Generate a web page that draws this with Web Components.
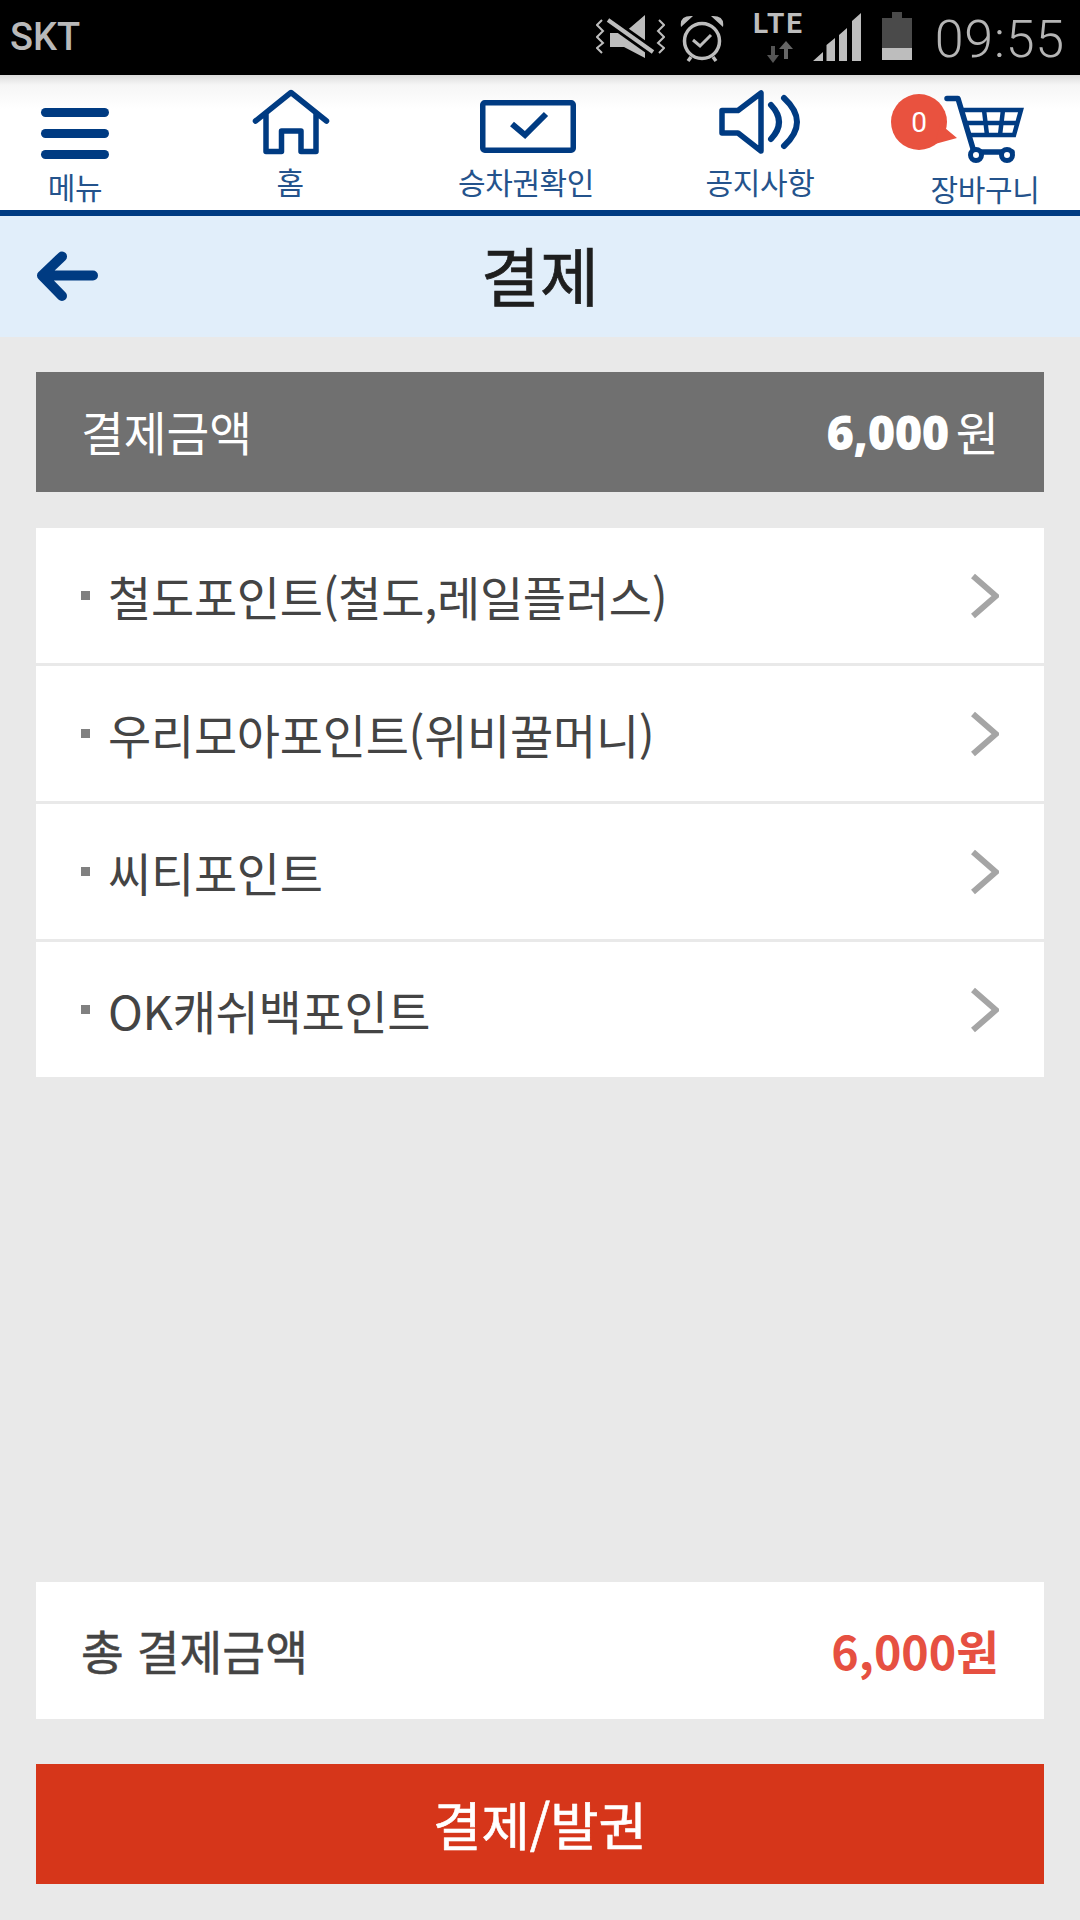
<!DOCTYPE html>
<html lang="ko"><head><meta charset="utf-8"><title>결제</title>
<style>
html,body{margin:0;padding:0;background:#e9e9e9}
body{font-family:"Noto Sans CJK KR","Noto Sans",sans-serif;width:1080px;height:1920px;overflow:hidden}
</style></head><body>
<app-screen>
  <status-bar></status-bar>
  <nav-bar>
    <nav-item w="150" drop="5" label="메뉴"><svg slot="icon" viewBox="15 85 120 85" width="120" height="85"><g fill="#003b82"><rect x="41" y="108" width="68" height="9" rx="4.500"/><rect x="41" y="129" width="68" height="9" rx="4.500"/><rect x="41" y="150" width="68" height="9" rx="4.500"/></g></svg></nav-item>
    <nav-item w="280" label="홈"><svg slot="icon" viewBox="230 85 120 85" width="120" height="85"><path d="M255.500 121L291 92.500L326.500 121M266 114V151.500H281.500V131H301V151.500H316V114" fill="none" stroke="#003b82" stroke-width="5.500" stroke-linecap="round" stroke-linejoin="round"/></svg></nav-item>
    <nav-item w="192" label="승차권확인"><svg slot="icon" viewBox="466 85 120 85" width="120" height="85"><rect x="482.750" y="102.750" width="90.500" height="47.500" rx="2" fill="none" stroke="#003b82" stroke-width="5.500"/><path d="M512 124L525 135L546 114" fill="none" stroke="#003b82" stroke-width="6"/></svg></nav-item>
    <nav-item w="276" label="공지사항"><svg slot="icon" viewBox="700 85 120 85" width="120" height="85"><path d="M722 110.500H738L761 93V151L738 133H722Z" fill="none" stroke="#003b82" stroke-width="5.500" stroke-linejoin="round"/><path d="M771 105Q787 122 771 139M784 98Q810 122 784 146" fill="none" stroke="#003b82" stroke-width="6" stroke-linecap="round"/></svg></nav-item>
    <nav-item w="174" drop="7" label="장바구니">
      <svg slot="icon" viewBox="925 85 120 85" width="120" height="85"><path d="M947 98.500H958L974 152H1012" fill="none" stroke="#003b82" stroke-width="5.500" stroke-linecap="round" stroke-linejoin="round"/><path d="M962 110H1021L1014 135H970M965 123H1018M984 110L987 135M1003 110L1000 135" fill="none" stroke="#003b82" stroke-width="4.500"/><circle cx="976" cy="155" r="5.500" fill="#fff" stroke="#003b82" stroke-width="5"/><circle cx="1007" cy="155" r="5.500" fill="#fff" stroke="#003b82" stroke-width="5"/></svg>
      <cart-badge slot="badge">0</cart-badge>
    </nav-item>
  </nav-bar>
  <title-bar>결제</title-bar>
  <main-area>
    <amount-bar><span slot="label">결제금액</span><b slot="num">6,000</b><span slot="unit">원</span></amount-bar>
    <option-row>철도포인트(철도,레일플러스)</option-row>
    <option-row>우리모아포인트(위비꿀머니)</option-row>
    <option-row>씨티포인트</option-row>
    <option-row>OK캐쉬백포인트</option-row>
    <total-bar><span slot="label">총 결제금액</span><span slot="value">6,000원</span></total-bar>
    <pay-button>결제/발권</pay-button>
  </main-area>
</app-screen>
<script>
function def(name,html,setup){
  customElements.define(name,class extends HTMLElement{
    constructor(){super();this.attachShadow({mode:'open'}).innerHTML=html;}
    connectedCallback(){if(setup)setup(this);}
  });
}
const FONT='"Noto Sans CJK KR","Noto Sans",sans-serif';
def('app-screen',`<style>:host{display:flex;flex-direction:column;width:1080px;height:1920px;font-family:${FONT}}</style><slot></slot>`);
def('status-bar',`<style>
:host{display:flex;align-items:center;height:75px;background:#000;color:#bdbdbd;flex:none}
.skt{font:500 38px Roboto,sans-serif;margin-left:10px;color:#b9b9b9;position:relative;top:-1px}
.r{margin-left:auto;display:flex;align-items:center}
svg{display:block}
.time{font:300 52px Roboto,sans-serif;margin:0 15px 0 23px;letter-spacing:.8px;color:#b5b5b5;position:relative;top:2px}
</style>
<span class="skt">SKT</span>
<div class="r">
<svg width="69" height="75" viewBox="597 0 69 75"><path d="M603 20L598 25L604 31L598 37L604 43L598 48L603 53M660 20L665 25L659 31L665 37L659 43L665 48L660 53" fill="none" stroke="#bdbdbd" stroke-width="2"/><path d="M611 33H625L646 15V58L625 47H611Z" fill="#bdbdbd"/><path d="M609 20L654 52" stroke="#000" stroke-width="10"/><path d="M609 20L654 52" stroke="#bdbdbd" stroke-width="4"/></svg>
<svg style="margin-left:15px" width="44" height="75" viewBox="681 0 44 75"><circle cx="703" cy="41" r="17.500" fill="none" stroke="#bdbdbd" stroke-width="3.500"/><path d="M694 40L701 46L712 35" fill="none" stroke="#bdbdbd" stroke-width="3"/><path d="M682 27Q680 15 694 16ZM724 27Q726 15 712 16Z" fill="#bdbdbd"/><path d="M692 57L689 61M714 57L717 61" stroke="#bdbdbd" stroke-width="3.500"/></svg>
<svg style="margin-left:29px" width="50" height="75" viewBox="753 0 50 75"><text x="753" y="33" font-family="Roboto,sans-serif" font-weight="700" font-size="28" fill="#bdbdbd" textLength="49">LTE</text><path d="M773 63L767 55H771V46H775V55H779Z" fill="#555"/><path d="M786 41L793 49H788V59H784V49H779Z" fill="#666"/></svg>
<svg style="margin-left:10px" width="48" height="75" viewBox="814 0 48 75"><path d="M814 61L824 52V61ZM827.500 61V45L836 38V61ZM840 61V35L848 28V61ZM853 61V21L862 13V61Z" fill="#bdbdbd"/></svg>
<svg style="margin-left:21px" width="30" height="75" viewBox="883 0 30 75"><path d="M883 18H893V12H903V18H913V48H883Z" fill="#4a4a4a"/><rect x="883" y="48" width="30" height="12" fill="#bdbdbd"/></svg>
<span class="time">09:55</span>
</div>`);
def('nav-bar',`<style>:host{display:flex;height:135px;background:linear-gradient(#dcdcdc 0,#f6f6f6 10px,#fff 34px);border-bottom:6px solid #003b82;flex:none;padding-right:8px}</style><slot></slot>`);
def('nav-item',`<style>
:host{display:flex;flex-direction:column;align-items:center;position:relative;padding-top:10px;box-sizing:border-box;height:135px;flex:none;color:#24538c}
.l{font-size:30px;line-height:40px;margin-top:-9px;letter-spacing:-.4px;white-space:nowrap}
::slotted(svg){display:block}
</style><slot name="icon"></slot><slot name="badge"></slot><div class="l"></div>`,el=>{
  el.style.width=el.getAttribute('w')+'px';
  const l=el.shadowRoot.querySelector('.l');
  l.textContent=el.getAttribute('label');
  l.style.transform=`translateY(${el.getAttribute('drop')||0}px)`;
});
def('cart-badge',`<style>
:host{position:absolute;left:-7px;top:19px;width:67px;height:56px;display:block}
svg{position:absolute;left:0;top:0}
span{position:absolute;left:0;top:0;width:56px;height:56px;display:flex;align-items:center;justify-content:center;color:#fff;font:400 28px Roboto,sans-serif}
</style><svg width="67" height="56" viewBox="0 0 67 56"><circle cx="28" cy="28" r="28" fill="#e9523f"/><path d="M52 18L54 34L66 44L44 50Z" fill="#e9523f"/></svg><span><slot></slot></span>`);
def('title-bar',`<style>:host{display:flex;align-items:center;justify-content:center;height:121px;background:#e1eefa;position:relative;flex:none;color:#1e1e1e;font-size:64px;font-weight:400;-webkit-text-stroke:.7px #1e1e1e}
svg{position:absolute;left:36px;top:34px}
span{position:relative;top:-4px}</style>
<svg width="62" height="52" viewBox="36 250 62 52"><path d="M42 275.500H93M62 256.500L42 275.500L62 296" fill="none" stroke="#003b82" stroke-width="10" stroke-linecap="round" stroke-linejoin="round"/></svg><span><slot></slot></span>`);
def('main-area',`<style>:host{display:flex;flex-direction:column;flex:1;background:#e9e9e9;padding:35px 36px 36px;box-sizing:border-box}</style><slot></slot>`);
def('amount-bar',`<style>:host{display:flex;align-items:center;height:120px;background:#707070;color:#fff;padding:0 46px 0 45px;margin-bottom:36px;font-size:46.5px;flex:none}
.s{flex:1;position:relative;top:-2px}.n{font:700 47px "Open Sans",sans-serif;letter-spacing:-.5px;margin-right:7px}.u{font-size:47px;margin-right:-1px;position:relative;top:-2px}</style>
<span class="s"><slot name="label"></slot></span><span class="n"><slot name="num"></slot></span><span class="u"><slot name="unit"></slot></span>`);
def('option-row',`<style>:host{display:flex;align-items:center;height:135px;background:#fff;margin-bottom:3px;padding:0 45px 0 45px;color:#444;font-size:47px;flex:none;letter-spacing:-.3px}
i{width:9px;height:9px;background:#808080;margin-right:18px;flex:none}
.t{flex:1;white-space:nowrap}
svg{display:block}</style><i></i><span class="t"><slot></slot></span>
<svg width="29" height="46" viewBox="0 0 29 46"><path d="M3 3L26 23L3 43" fill="none" stroke="#a5a5a5" stroke-width="6"/></svg>`);
def('total-bar',`<style>:host{display:flex;align-items:center;justify-content:space-between;height:137px;background:#fff;margin-top:auto;margin-bottom:45px;padding:0 45px 2px;box-sizing:border-box;font-size:46.5px;color:#444;flex:none;font-weight:400;-webkit-text-stroke:.5px #444}
.v{color:#e65041;font-weight:700;-webkit-text-stroke:0}</style><slot name="label"></slot><span class="v"><slot name="value"></slot></span>`);
def('pay-button',`<style>:host{display:flex;align-items:center;justify-content:center;height:120px;background:#d6361a;color:#fff;font-size:52.5px;font-weight:400;flex:none;padding-bottom:2px;box-sizing:border-box;-webkit-text-stroke:.6px #fff}</style><slot></slot>`);
</script>
</body></html>
